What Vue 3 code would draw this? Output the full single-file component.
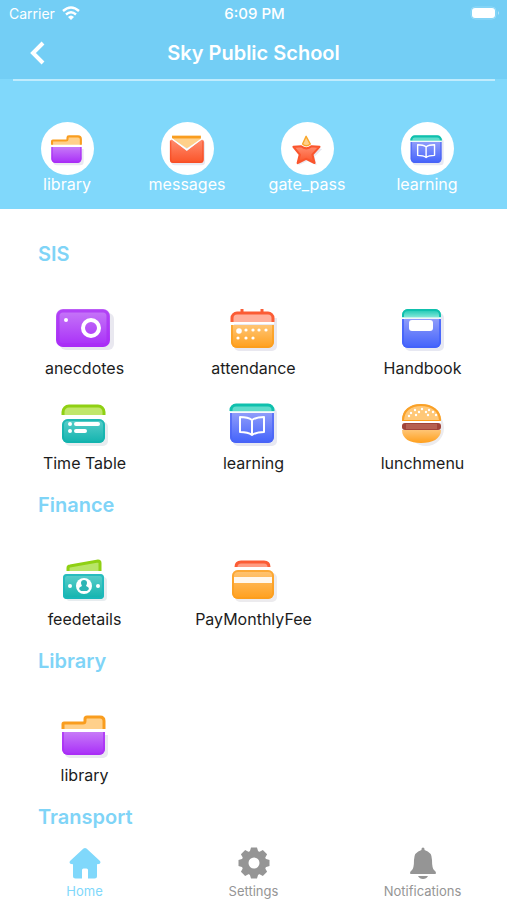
<script setup>
import { ref } from 'vue';

const activeTab = ref('Home');

const shortcuts = [
  { label: 'library', icon: 'library' },
  { label: 'messages', icon: 'messages' },
  { label: 'gate_pass', icon: 'star' },
  { label: 'learning', icon: 'learning' },
];

const sections = [
  {
    title: 'SIS',
    items: [
      { label: 'anecdotes', icon: 'camera' },
      { label: 'attendance', icon: 'calendar' },
      { label: 'Handbook', icon: 'handbook' },
      { label: 'Time Table', icon: 'timetable' },
      { label: 'learning', icon: 'learning' },
      { label: 'lunchmenu', icon: 'burger' },
    ],
  },
  {
    title: 'Finance',
    items: [
      { label: 'feedetails', icon: 'money' },
      { label: 'PayMonthlyFee', icon: 'card' },
    ],
  },
  {
    title: 'Library',
    items: [{ label: 'library', icon: 'library' }],
  },
  {
    title: 'Transport',
    items: [],
  },
];

const tabs = ['Home', 'Settings', 'Notifications'];
</script>

<template>
  <!-- shared icon shapes -->
  <svg class="sprite" aria-hidden="true">
    <defs>
      <linearGradient id="purple" x1="0" y1="0" x2="0" y2="1">
        <stop offset="0" stop-color="#c77af8" />
        <stop offset="1" stop-color="#a82df8" />
      </linearGradient>
      <linearGradient id="orange" x1="0" y1="0" x2="0" y2="1">
        <stop offset="0" stop-color="#ffc575" />
        <stop offset="1" stop-color="#ff9f1c" />
      </linearGradient>
      <linearGradient id="red" x1="0" y1="0" x2="0" y2="1">
        <stop offset="0" stop-color="#ff8d70" />
        <stop offset="1" stop-color="#fb5327" />
      </linearGradient>
      <linearGradient id="blue" x1="0" y1="0" x2="0" y2="1">
        <stop offset="0" stop-color="#8f9cfa" />
        <stop offset="1" stop-color="#4262fb" />
      </linearGradient>
      <linearGradient id="teal" x1="0" y1="0" x2="0" y2="1">
        <stop offset="0" stop-color="#5ccfcb" />
        <stop offset="1" stop-color="#12b3ae" />
      </linearGradient>
      <linearGradient id="mint" x1="0" y1="0" x2="0" y2="1">
        <stop offset="0" stop-color="#0fc4b0" />
        <stop offset="1" stop-color="#8deadb" />
      </linearGradient>
    </defs>

    <symbol id="icon-library" viewBox="0 0 64 48">
      <path d="M12 24h43v18a5 5 0 0 1-5 5H17a5 5 0 0 1-5-5z" fill="#e9e8f0" />
      <path d="M10 18v-5q0-1 1-1h19q2 0 2-2V8q0-2 2-2h13q4 0 4 4v8z" fill="#ffd08a" />
      <path d="M10 18v-5q0-1 1-1h19q2 0 2-2V8q0-2 2-2h13q4 0 4 4v8" fill="none" stroke="#f99d1f" stroke-width="3" />
      <path d="M9 21h43v17a6 6 0 0 1-6 6H15a6 6 0 0 1-6-6z" fill="url(#purple)" />
      <path d="M10 21v17a5 5 0 0 0 5 5h31a5 5 0 0 0 5-5V21" fill="none" stroke="#a92cf5" stroke-width="2" opacity=".7" />
    </symbol>

    <symbol id="icon-messages" viewBox="0 0 64 48">
      <rect x="9" y="12" width="48" height="35" rx="5" fill="#e9e8f0" />
      <path d="M10 6h41v5L31 23 10 9z" fill="#ffd08a" />
      <path d="M10 5h41v4H10z" fill="#f99d1f" />
      <path d="M7 12l3-2 21 17 21-17 3 2v27a5 5 0 0 1-5 5H12a5 5 0 0 1-5-5z" fill="url(#red)" />
      <path d="M8 13v26a4 4 0 0 0 4 4h38a4 4 0 0 0 4-4V13" fill="none" stroke="#f64c24" stroke-width="2" opacity=".7" />
      <path d="M9 9l22 16L53 9" fill="none" stroke="#fff" stroke-width="2" />
    </symbol>

    <symbol id="icon-star" viewBox="0 0 64 48">
      <path d="M14 24l12-2 6 6 6-6 15 2-11 11 3 12-13-6-13 6 3-12z" fill="#e9e8f0" />
      <path d="M30 6l-5 11q5 5 11 0z" fill="#ffd08a" stroke="#f9a72c" stroke-width="2" stroke-linejoin="round" />
      <path d="M12 21l11-1q7 6 15 0l11 1-10 11 3 12-12-6-12 6 3-12z" fill="url(#red)" stroke="#fa552d" stroke-width="3" stroke-linejoin="round" />
    </symbol>

    <symbol id="icon-learning" viewBox="0 0 64 48">
      <rect x="11" y="9" width="44" height="38" rx="5" fill="#e7e8f2" />
      <path d="M8 13v-2a6 6 0 0 1 6-6h32a6 6 0 0 1 6 6v2z" fill="#5fdccb" />
      <path d="M9 12v-1a5 5 0 0 1 5-5h32a5 5 0 0 1 5 5v1" fill="none" stroke="#0fc0ad" stroke-width="3" />
      <path d="M8 14h44v24a6 6 0 0 1-6 6H14a6 6 0 0 1-6-6z" fill="url(#blue)" />
      <path d="M9 14v24a5 5 0 0 0 5 5h32a5 5 0 0 0 5-5V14" fill="none" stroke="#4a64f5" stroke-width="2" opacity=".7" />
      <path d="M8 13h44" stroke="#fff" stroke-width="1.500" />
      <path d="M30 21q-4-3-12-3v15q8 0 12 3q4-3 12-3V18q-8 0-12 3zv15" fill="none" stroke="#fff" stroke-width="2" stroke-linejoin="round" />
    </symbol>

    <symbol id="icon-camera" viewBox="0 0 64 48">
      <rect x="7" y="9" width="54" height="37" rx="6" fill="#e9e8f0" />
      <rect x="3" y="5" width="54" height="38" rx="7" fill="url(#purple)" />
      <rect x="5" y="7" width="50" height="34" rx="5" fill="none" stroke="#a92cf5" stroke-width="3" opacity=".7" />
      <circle cx="38" cy="24" r="8" fill="none" stroke="#fff" stroke-width="4" />
      <circle cx="13" cy="16" r="2" fill="#fff" />
    </symbol>

    <symbol id="icon-calendar" viewBox="0 0 64 48">
      <path d="M12 14h43v28a5 5 0 0 1-5 5H17a5 5 0 0 1-5-5z" fill="#e9e8f0" />
      <path d="M10 18v-4a5 5 0 0 1 5-5h31a5 5 0 0 1 5 5v4z" fill="#ffb09c" />
      <path d="M10 18v-4a5 5 0 0 1 5-5h31a5 5 0 0 1 5 5v4M20 9V5M40 9V5" fill="none" stroke="#fb5c35" stroke-width="3" />
      <path d="M9 21h43v17a6 6 0 0 1-6 6H15a6 6 0 0 1-6-6z" fill="url(#orange)" />
      <path d="M10 21v17a5 5 0 0 0 5 5h31a5 5 0 0 0 5-5V21" fill="none" stroke="#fb9d1c" stroke-width="2" opacity=".7" />
      <path d="M9 19h43" stroke="#fff" stroke-width="2" />
      <g fill="#fff">
        <circle cx="17" cy="27" r="2.800" />
        <circle cx="24" cy="26" r="1.600" />
        <circle cx="31" cy="26" r="1.600" />
        <circle cx="37" cy="26" r="1.600" />
        <circle cx="44" cy="26" r="1.600" />
        <circle cx="16" cy="34" r="1.600" />
        <circle cx="24" cy="34" r="1.600" />
        <circle cx="31" cy="34" r="1.600" />
      </g>
    </symbol>

    <symbol id="icon-handbook" viewBox="0 0 64 48">
      <rect x="14" y="9" width="39" height="38" rx="5" fill="#e7e8f2" />
      <path d="M11 14v-3a6 6 0 0 1 6-6h27a6 6 0 0 1 6 6v3z" fill="url(#mint)" />
      <path d="M12 13v-2a5 5 0 0 1 5-5h27a5 5 0 0 1 5 5v2" fill="none" stroke="#0fc0ad" stroke-width="2" />
      <path d="M11 15h39v23a6 6 0 0 1-6 6H17a6 6 0 0 1-6-6z" fill="url(#blue)" />
      <path d="M12 15v23a5 5 0 0 0 5 5h27a5 5 0 0 0 5-5V15" fill="none" stroke="#4262fb" stroke-width="2" opacity=".8" />
      <path d="M11 14h39" stroke="#fff" stroke-width="1" />
      <rect x="18" y="16" width="24" height="11" rx="3" fill="#fff" />
    </symbol>

    <symbol id="icon-timetable" viewBox="0 0 64 48">
      <rect x="12" y="23" width="43" height="24" rx="5" fill="#e7ecef" />
      <path d="M10 16v-3a6 6 0 0 1 6-6h29a6 6 0 0 1 6 6v3z" fill="#c0e76b" />
      <path d="M10 16v-3a6 6 0 0 1 6-6h29a6 6 0 0 1 6 6v3" fill="none" stroke="#8fd013" stroke-width="3" />
      <rect x="9" y="20" width="43" height="24" rx="6" fill="url(#teal)" />
      <rect x="10" y="21" width="41" height="22" rx="5" fill="none" stroke="#12b3ae" stroke-width="2" opacity=".8" />
      <path d="M17 25h0M17 32h0M23 25h22M23 32h9" stroke="#fff" stroke-width="4" stroke-linecap="round" />
    </symbol>

    <symbol id="icon-burger" viewBox="0 0 64 48">
      <ellipse cx="35" cy="29" rx="18" ry="18" fill="#ecebee" />
      <path d="M11 22C11 11 19 5 30 5s20 6 20 17z" fill="url(#orange)" />
      <path d="M13 21C13 12 20 7 30 7s18 5 18 14z" fill="#ffc878" />
      <path d="M12 21C12 12 19 6 30 6s19 6 19 15" fill="none" stroke="#f9a128" stroke-width="2" />
      <rect x="11" y="22" width="39" height="2" fill="#fff" />
      <path d="M11 31h39c0 9-9 13-20 13s-19-4-19-13z" fill="url(#orange)" />
      <rect x="11" y="24" width="39" height="7" rx="3" fill="#a1443a" />
      <rect x="15" y="25" width="31" height="5" fill="#b66052" />
      <g fill="#fff">
        <circle cx="24" cy="11" r="1.200" />
        <circle cx="31" cy="10" r="1.200" />
        <circle cx="38" cy="11" r="1.200" />
        <circle cx="20" cy="14" r="1.200" />
        <circle cx="28" cy="13" r="1.200" />
        <circle cx="35" cy="13" r="1.200" />
        <circle cx="42" cy="13" r="1.200" />
        <circle cx="18" cy="17" r="1.200" />
        <circle cx="25" cy="16" r="1.200" />
        <circle cx="37" cy="16" r="1.200" />
        <circle cx="45" cy="16" r="1.200" />
      </g>
    </symbol>

    <symbol id="icon-money" viewBox="0 0 64 48">
      <rect x="13" y="22" width="41" height="24" rx="4" fill="#e7ecef" />
      <path d="M15 16v-3q0-2 2-2l28-5q2 0 2 2v8z" fill="#b8e567" />
      <path d="M15 16v-3q0-2 2-2l28-5q2 0 2 2v8" fill="none" stroke="#8fd013" stroke-width="3" />
      <rect x="10" y="19" width="41" height="25" rx="4" fill="url(#teal)" />
      <rect x="11" y="20" width="39" height="23" rx="3" fill="none" stroke="#1cb8bb" stroke-width="2" opacity=".8" />
      <circle cx="31" cy="31" r="8" fill="#fff" />
      <path d="M31 25q3 0 3 3 0 1-1 3 3 1 3 3l-2 2h-6l-2-2q0-2 3-3-1-2-1-3 0-3 3-3z" fill="#2cb5b5" />
      <circle cx="17" cy="31" r="2" fill="#fff" />
      <circle cx="45" cy="31" r="2" fill="#fff" />
    </symbol>

    <symbol id="icon-card" viewBox="0 0 64 48">
      <rect x="13" y="18" width="42" height="29" rx="5" fill="#ecebee" />
      <path d="M14 12q0-6 5-6h23q5 0 5 6z" fill="#ff9c82" />
      <path d="M14 12q0-5 5-5h23q5 0 5 5" fill="none" stroke="#fb5c35" stroke-width="3" />
      <rect x="10" y="15" width="42" height="29" rx="6" fill="url(#orange)" />
      <rect x="11" y="16" width="40" height="27" rx="5" fill="none" stroke="#fb9d1c" stroke-width="2" opacity=".7" />
      <rect x="12" y="22" width="38" height="6" fill="#fff" opacity=".9" />
    </symbol>
  </svg>

  <div class="app">
    <header class="header">
      <div class="status">
        <span class="carrier">
          Carrier
          <svg class="wifi" viewBox="0 0 18 14" aria-hidden="true">
            <path d="M1 5Q9-2 17 5M4 8.500q5-4.500 10 0" fill="none" stroke="#fff" stroke-width="2.400" />
            <path d="M6 11q3-3 6 0l-3 3z" fill="#fff" />
          </svg>
        </span>
        <span class="time">6:09 PM</span>
        <svg class="battery" viewBox="0 0 30 14" aria-hidden="true">
          <rect x="1" y="1" width="25" height="12" rx="4" fill="none" stroke="#94daf8" />
          <rect x="2" y="2" width="23" height="10" rx="3" fill="#fff" />
          <path d="M28 5q2 2 0 4z" fill="#b5e5fa" />
        </svg>
      </div>
      <div class="navbar">
        <button class="back" type="button" aria-label="Back">
          <svg viewBox="0 0 16 24" aria-hidden="true">
            <path d="M13 2L3 12l10 10" fill="none" stroke="#fff" stroke-width="4" />
          </svg>
        </button>
        <h1 class="title">Sky Public School</h1>
      </div>
    </header>

    <div class="shortcuts">
      <button v-for="item in shortcuts" :key="item.label" class="shortcut" type="button">
        <span class="circle">
          <svg aria-hidden="true"><use :href="`#icon-${item.icon}`" /></svg>
        </span>
        {{ item.label }}
      </button>
    </div>

    <main class="content">
      <section v-for="section in sections" :key="section.title" class="section">
        <h2 class="section-title">{{ section.title }}</h2>
        <div v-if="section.items.length" class="grid">
          <button v-for="item in section.items" :key="item.label" class="item" type="button">
            <svg aria-hidden="true"><use :href="`#icon-${item.icon}`" /></svg>
            {{ item.label }}
          </button>
        </div>
      </section>
    </main>

    <nav class="tabs">
      <a
        v-for="tab in tabs"
        :key="tab"
        :href="`#${tab}`"
        class="tab"
        :class="{ active: tab === activeTab }"
        @click.prevent="activeTab = tab"
      >
        <svg viewBox="0 0 32 32" fill="currentColor" aria-hidden="true">
          <path
            v-if="tab === 'Home'"
            d="M14.500 1.500q1.500-1.200 3 0L31 14q1 1 0 2.500-.6.700-3 .7V29q0 2.500-2.500 2.500H19V23q0-1.500-1.500-1.500h-3Q13 21.500 13 23v8.500H6.500Q4 31.500 4 29V17.200q-2.400 0-3-.7-1-1.500 0-2.500z"
          />
          <g v-else-if="tab === 'Settings'">
            <circle cx="16" cy="16" r="9" fill="none" stroke="currentColor" stroke-width="7" />
            <g v-for="n in 8" :key="n" :transform="`rotate(${n * 45} 16 16)`">
              <path d="M13 .500h6l1.500 5h-9z" />
            </g>
          </g>
          <g v-else>
            <path d="M14.500 2q0-1.500 1.500-1.500T17.500 2v1q7.500 2 7.500 10 0 8 2 10 2 1.500 2 3 0 1-1 1H4q-1 0-1-1 0-1.500 2-3 2-2 2-10 0-8 7.500-10z" />
            <path d="M11 29h10q-1.500 3-5 3t-5-3z" />
          </g>
        </svg>
        {{ tab }}
      </a>
    </nav>
  </div>
</template>

<style>
body {
  margin: 0;
}
</style>

<style scoped>
.sprite {
  position: absolute;
  width: 0;
  height: 0;
}
.app {
  display: flex;
  flex-direction: column;
  min-height: 100vh;
  background-color: #fff;
  color: #1c1c1c;
  font-family: Inter, "Liberation Sans", sans-serif;
}
button {
  padding: 0;
  border: 0;
  background: none;
  color: inherit;
  font-family: inherit;
  cursor: pointer;
}
.header {
  background-color: #73cef5;
  color: #fff;
}
.status {
  display: grid;
  grid-template-columns: 1fr auto 1fr;
  align-items: center;
  height: 26px;
  padding: 0 7px 0 9px;
  font-size: 14px;
}
.carrier {
  display: flex;
  align-items: center;
  gap: 7px;
}
.wifi {
  width: 18px;
  height: 14px;
}
.time {
  font-size: 15px;
  font-weight: 500;
}
.battery {
  justify-self: end;
  width: 30px;
  height: 14px;
}
.navbar {
  display: grid;
  grid-template-columns: 40px 1fr 40px;
  align-items: center;
  height: 53px;
  padding: 0 18px;
}
.back {
  display: flex;
  justify-content: center;
}
.back svg {
  width: 16px;
  height: 24px;
}
.title {
  margin: 0;
  font-size: 20px;
  font-weight: 600;
  line-height: 24px;
  text-align: center;
}
.shortcuts {
  display: grid;
  grid-template-columns: repeat(4, 1fr);
  padding: 0 20px 16px 7px;
  background-color: #80d8fb;
}
.shortcuts::before {
  content: "";
  grid-column: 1 / -1;
  height: 2px;
  margin: 0 -8px 41px 6px;
  background-color: #c0ecfd;
}
.shortcut {
  display: flex;
  flex-direction: column;
  align-items: center;
  color: #fff;
  font-size: 16px;
  line-height: 18px;
}
.circle {
  display: flex;
  align-items: center;
  justify-content: center;
  width: 53px;
  height: 53px;
  border-radius: 50%;
  background-color: #fff;
}
.circle svg {
  width: 45px;
  height: 34px;
}
.content {
  flex: 1;
  padding-top: 33px;
}
.section {
  margin-bottom: 20px;
}
.section:last-child {
  margin-bottom: 0;
}
.section-title {
  margin: 0 38px;
  color: #7fd4f7;
  font-size: 20px;
  font-weight: 600;
  line-height: 24px;
}
.grid {
  display: grid;
  grid-template-columns: repeat(3, 1fr);
  row-gap: 21px;
  margin-top: 38px;
}
.item {
  display: flex;
  flex-direction: column;
  align-items: center;
  gap: 6px;
  font-size: 16px;
  line-height: 20px;
}
.item svg {
  width: 64px;
  height: 48px;
}
.tabs {
  position: sticky;
  bottom: 0;
  display: grid;
  grid-template-columns: repeat(3, 1fr);
  padding: 16px 0 1px;
  background-color: #fff;
}
.tab {
  display: flex;
  flex-direction: column;
  align-items: center;
  gap: 4px;
  color: #959595;
  font-size: 13px;
  line-height: 16px;
  text-decoration: none;
}
.tab svg {
  width: 32px;
  height: 32px;
}
.tab.active {
  color: #80d8fb;
}
</style>
